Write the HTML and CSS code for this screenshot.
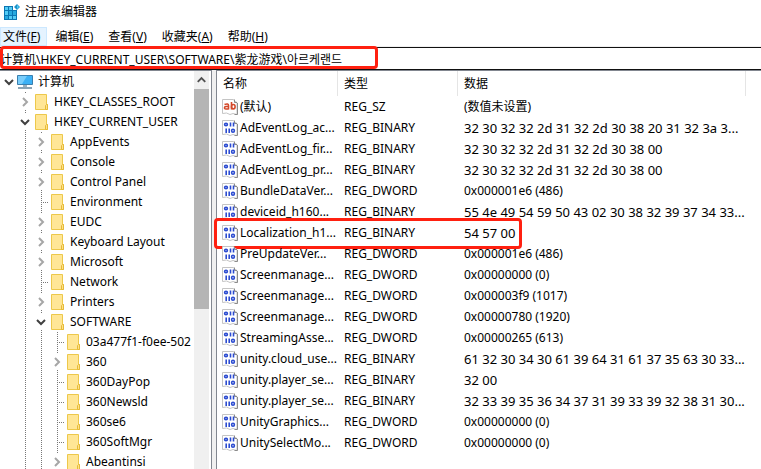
FILE: index.html
```html
<!DOCTYPE html>
<html lang="zh-CN">
<head>
  <meta charset="UTF-8">
  <meta name="viewport" content="width=device-width, initial-scale=1.0">
  <title>注册表编辑器</title>
  <link rel="stylesheet" href="styles.css">
</head>
<body>
  <svg class="sprite" aria-hidden="true">
    <symbol id="folder" viewBox="0 0 16 16">
      <path d="M2.5.5h11v10h1v5h-12z" fill="#ffe696" stroke="#edc84b"/>
      <path d="M12.5 15.5v-4l1-1h1v5z" fill="#ffe08a" stroke="#e6bb38"/>
    </symbol>
    <symbol id="right" viewBox="0 0 16 16">
      <path d="M6 4l4 4-4 4" fill="none" stroke="#a6a6a6" stroke-width="2"/>
    </symbol>
    <symbol id="down" viewBox="0 0 16 16">
      <path d="M4 6l4 4 4-4" fill="none" stroke="#404040" stroke-width="2"/>
    </symbol>
    <symbol id="page" viewBox="0 0 16 16">
      <path d="M.5.5h11l1 1.500 2.500 1.500v12l-4-1-3 1-3.500-1.500-4 .500z" fill="#fff" stroke="#c4c4c4"/>
      <path d="M12.500.500v3h2.500M15.500 4v11.500h-3" fill="none" stroke="#8c8c8c"/>
    </symbol>
    <symbol id="binary" viewBox="0 0 16 16">
      <use href="#page"/>
      <g fill="none" stroke="#2b4bd0" stroke-width="1.600">
        <ellipse cx="4" cy="4.500" rx="1.400" ry="1.200"/>
        <path d="M8.500 2.500v4M11.500 2.500v4M4.200 8.500v4.500M7.200 8.500v4.500"/>
        <ellipse cx="11" cy="10.800" rx="1.400" ry="1.500"/>
      </g>
    </symbol>
    <symbol id="string" viewBox="0 0 16 16">
      <use href="#page"/>
      <g fill="none" stroke="#d3492b" stroke-width="1.600">
        <path d="M2.500 5.500Q6.500 4 6.500 6.500V10.500M6.500 7.500H4Q2.500 7.500 2.500 8.800T4 10H6.500"/>
        <path d="M9.500 3v7.500"/>
        <ellipse cx="11.300" cy="7.700" rx="1.800" ry="2.200"/>
      </g>
    </symbol>
  </svg>

  <header class="titlebar">
    <svg class="app-icon" viewBox="0 0 16 16">
      <path d="M0 2h9v4h4v10H0z" fill="#0b76b3"/>
      <path d="M1 3h3v3H1zM5 3h3v3H5zM1 7h3v4H1zM5 12h3v3H5zM9 12h3v3H9z" fill="#53ccf5"/>
      <path d="M5 7h3v4H5zM9 7h3v4H9zM1 12h3v3H1z" fill="#26a9e0"/>
      <path d="M13 0l3 3-3 3-3-3z" fill="#1a91c9"/>
      <path d="M13 1l2 2-2 2z" fill="#53ccf5"/>
    </svg>
    <span>注册表编辑器</span>
  </header>

  <nav class="menu">
    <button class="open">文件(<u>F</u>)</button>
    <button>编辑(<u>E</u>)</button>
    <button>查看(<u>V</u>)</button>
    <button>收藏夹(<u>A</u>)</button>
    <button>帮助(<u>H</u>)</button>
  </nav>

  <div class="address">
    <input type="text" aria-label="地址" value="计算机\HKEY_CURRENT_USER\SOFTWARE\紫龙游戏\아르케랜드">
    <span class="mark"></span>
  </div>

  <main class="panes">
    <section class="tree-pane">
      <ul class="tree">
        <li>
          <div class="node">
            <button class="toggle" aria-label="计算机"><svg><use href="#down"/></svg></button>
            <svg viewBox="0 0 16 16">
              <path d="M.5 1.500h15v9H.5z" fill="#3cb1f5" stroke="#3a7fae"/>
              <path d="M1 2h9L5 10H1z" fill="#79cdfb"/>
              <path d="M6 11h4v2H6z" fill="#9db2bf"/>
              <path d="M1 14h14" stroke="#8aa4b5" stroke-width="2"/>
            </svg>
            <span>计算机</span>
          </div>
          <ul>
            <li><div class="node"><button class="toggle" aria-label="HKEY_CLASSES_ROOT"><svg><use href="#right"/></svg></button><svg><use href="#folder"/></svg><span>HKEY_CLASSES_ROOT</span></div></li>
            <li>
              <div class="node"><button class="toggle" aria-label="HKEY_CURRENT_USER"><svg><use href="#down"/></svg></button><svg><use href="#folder"/></svg><span>HKEY_CURRENT_USER</span></div>
              <ul>
                <li><div class="node"><button class="toggle" aria-label="AppEvents"><svg><use href="#right"/></svg></button><svg><use href="#folder"/></svg><span>AppEvents</span></div></li>
                <li><div class="node"><button class="toggle" aria-label="Console"><svg><use href="#right"/></svg></button><svg><use href="#folder"/></svg><span>Console</span></div></li>
                <li><div class="node"><button class="toggle" aria-label="Control Panel"><svg><use href="#right"/></svg></button><svg><use href="#folder"/></svg><span>Control Panel</span></div></li>
                <li><div class="node leaf"><svg><use href="#folder"/></svg><span>Environment</span></div></li>
                <li><div class="node"><button class="toggle" aria-label="EUDC"><svg><use href="#right"/></svg></button><svg><use href="#folder"/></svg><span>EUDC</span></div></li>
                <li><div class="node"><button class="toggle" aria-label="Keyboard Layout"><svg><use href="#right"/></svg></button><svg><use href="#folder"/></svg><span>Keyboard Layout</span></div></li>
                <li><div class="node"><button class="toggle" aria-label="Microsoft"><svg><use href="#right"/></svg></button><svg><use href="#folder"/></svg><span>Microsoft</span></div></li>
                <li><div class="node leaf"><svg><use href="#folder"/></svg><span>Network</span></div></li>
                <li><div class="node"><button class="toggle" aria-label="Printers"><svg><use href="#right"/></svg></button><svg><use href="#folder"/></svg><span>Printers</span></div></li>
                <li>
                  <div class="node"><button class="toggle" aria-label="SOFTWARE"><svg><use href="#down"/></svg></button><svg><use href="#folder"/></svg><span>SOFTWARE</span></div>
                  <ul>
                    <li><div class="node leaf"><svg><use href="#folder"/></svg><span>03a477f1-f0ee-502</span></div></li>
                    <li><div class="node"><button class="toggle" aria-label="360"><svg><use href="#right"/></svg></button><svg><use href="#folder"/></svg><span>360</span></div></li>
                    <li><div class="node leaf"><svg><use href="#folder"/></svg><span>360DayPop</span></div></li>
                    <li><div class="node leaf"><svg><use href="#folder"/></svg><span>360Newsld</span></div></li>
                    <li><div class="node leaf"><svg><use href="#folder"/></svg><span>360se6</span></div></li>
                    <li><div class="node leaf"><svg><use href="#folder"/></svg><span>360SoftMgr</span></div></li>
                    <li><div class="node"><button class="toggle" aria-label="Abeantinsi"><svg><use href="#right"/></svg></button><svg><use href="#folder"/></svg><span>Abeantinsi</span></div></li>
                  </ul>
                </li>
              </ul>
            </li>
          </ul>
        </li>
      </ul>
      <div class="scrollbar">
        <button aria-label="向上滚动"><svg viewBox="0 0 16 16"><path d="M4 10l4-4 4 4" fill="none" stroke="#505050" stroke-width="2"/></svg></button>
        <div class="track"><div class="thumb"></div></div>
      </div>
    </section>

    <section class="value-pane">
      <table class="values">
        <colgroup><col class="col-name"><col class="col-type"><col class="col-data"><col></colgroup>
        <thead>
          <tr><th>名称</th><th>类型</th><th>数据</th><th></th></tr>
        </thead>
        <tbody>
          <tr><td><svg><use href="#string"/></svg>(默认)</td><td>REG_SZ</td><td>(数值未设置)</td></tr>
          <tr><td><svg><use href="#binary"/></svg>AdEventLog_ac...</td><td>REG_BINARY</td><td class="bytes">32 30 32 32 2d 31 32 2d 30 38 20 31 32 3a 3...</td></tr>
          <tr><td><svg><use href="#binary"/></svg>AdEventLog_fir...</td><td>REG_BINARY</td><td class="bytes">32 30 32 32 2d 31 32 2d 30 38 00</td></tr>
          <tr><td><svg><use href="#binary"/></svg>AdEventLog_pr...</td><td>REG_BINARY</td><td class="bytes">32 30 32 32 2d 31 32 2d 30 38 00</td></tr>
          <tr><td><svg><use href="#binary"/></svg>BundleDataVer...</td><td>REG_DWORD</td><td>0x000001e6 (486)</td></tr>
          <tr><td><svg><use href="#binary"/></svg>deviceid_h160...</td><td>REG_BINARY</td><td class="bytes">55 4e 49 54 59 50 43 02 30 38 32 39 37 34 33...</td></tr>
          <tr><td><svg><use href="#binary"/></svg>Localization_h1...<span class="mark"></span></td><td>REG_BINARY</td><td class="bytes">54 57 00</td></tr>
          <tr><td><svg><use href="#binary"/></svg>PreUpdateVer...</td><td>REG_DWORD</td><td>0x000001e6 (486)</td></tr>
          <tr><td><svg><use href="#binary"/></svg>Screenmanage...</td><td>REG_DWORD</td><td>0x00000000 (0)</td></tr>
          <tr><td><svg><use href="#binary"/></svg>Screenmanage...</td><td>REG_DWORD</td><td>0x000003f9 (1017)</td></tr>
          <tr><td><svg><use href="#binary"/></svg>Screenmanage...</td><td>REG_DWORD</td><td>0x00000780 (1920)</td></tr>
          <tr><td><svg><use href="#binary"/></svg>StreamingAsse...</td><td>REG_DWORD</td><td>0x00000265 (613)</td></tr>
          <tr><td><svg><use href="#binary"/></svg>unity.cloud_use...</td><td>REG_BINARY</td><td class="bytes">61 32 30 34 30 61 39 64 31 61 37 35 63 30 33...</td></tr>
          <tr><td><svg><use href="#binary"/></svg>unity.player_se...</td><td>REG_BINARY</td><td class="bytes">32 00</td></tr>
          <tr><td><svg><use href="#binary"/></svg>unity.player_se...</td><td>REG_BINARY</td><td class="bytes">32 33 39 35 36 34 37 31 39 33 39 32 38 31 30...</td></tr>
          <tr><td><svg><use href="#binary"/></svg>UnityGraphics...</td><td>REG_DWORD</td><td>0x00000000 (0)</td></tr>
          <tr><td><svg><use href="#binary"/></svg>UnitySelectMo...</td><td>REG_DWORD</td><td>0x00000000 (0)</td></tr>
        </tbody>
      </table>
    </section>
  </main>
</body>
</html>
```

FILE: styles.css
```css
* {
  box-sizing: border-box;
}
body {
  display: flex;
  flex-direction: column;
  height: 100vh;
  margin: 0;
  overflow: hidden;
  background: #fff;
  color: #000;
  font: 12px/20px "Noto Sans", "Noto Sans CJK SC", sans-serif;
}
button, input {
  border: 0;
  padding: 0;
  background: none;
  color: inherit;
  font: inherit;
}
ul {
  margin: 0;
  padding: 0;
  list-style: none;
}
svg {
  display: block;
  flex: none;
  width: 16px;
  height: 16px;
}
.sprite {
  position: absolute;
  width: 0;
  height: 0;
}
.mark {
  position: absolute;
  border: 3px solid #ff2010;
  border-radius: 4px;
  pointer-events: none;
}

/* title and menu */
.titlebar {
  display: flex;
  gap: 5px;
  align-items: center;
  height: 27px;
  padding: 0 4px 3px;
  flex: none;
}
.menu {
  display: flex;
  height: 19px;
  flex: none;
}
.menu button {
  padding: 0 7px 0 8px;
  line-height: 19px;
}
.menu .open {
  padding-left: 3px;
  background: #e5f3ff;
  box-shadow: inset 0 0 0 1px #cce8ff;
}

/* address */
.address {
  position: relative;
  flex: none;
  padding-top: 1px;
  background: #f0f0f0;
}
.address input {
  display: block;
  width: 100%;
  height: 23px;
  border: solid #111;
  border-width: 1px 0;
  background: #fff;
}
.address .mark {
  inset: 0 auto 1px 0;
  width: 378px;
}

/* panes */
.panes {
  display: flex;
  gap: 4px;
  flex: 1;
  min-height: 0;
  background: #f0f0f0;
}
.tree-pane {
  display: flex;
  width: 212px;
  flex: none;
  padding-right: 2px;
  border: solid #828790;
  border-width: 1px 1px 0 0;
  background: #fff;
}
.tree {
  flex: 1;
  min-width: 0;
  overflow: hidden;
  padding: 1px 0 0;
}
.tree ul {
  padding-left: 16px;
  background: repeating-linear-gradient(#777 0 1px, transparent 1px 2px) 25px 0 / 1px 100% no-repeat;
}
.node {
  display: flex;
  align-items: center;
  height: 20px;
  padding-left: 1px;
  white-space: nowrap;
}
.node span {
  padding-left: 5px;
}
.toggle {
  background: #fff;
}
.leaf::before {
  content: "";
  width: 7px;
  height: 1px;
  margin-left: 9px;
  background: repeating-linear-gradient(90deg, transparent 0 1px, #777 1px 2px);
}
.scrollbar {
  display: flex;
  flex-direction: column;
  width: 15px;
  background: #f0f0f0;
}
.scrollbar button {
  height: 18px;
}
.scrollbar svg {
  width: 15px;
}
.track {
  flex: 1;
}
.thumb {
  height: 58%;
  background: #b5b5b5;
}

/* values */
.value-pane {
  flex: 1;
  min-width: 0;
  border: solid #828790;
  border-width: 1px 0 0 1px;
  background: #fff;
}
.values {
  width: 100%;
  table-layout: fixed;
  border-collapse: separate;
  border-spacing: 0;
}
.col-name {
  width: 121px;
}
.col-type {
  width: 120px;
}
.col-data {
  width: 288px;
}
.values th {
  height: 25px;
  padding: 0 6px;
  border-right: 1px solid #e5e5e5;
  font-weight: normal;
  text-align: left;
}
.values th:last-child {
  border: 0;
}
.values tbody tr {
  position: relative;
}
.values td {
  height: 21px;
  padding: 0 0 0 6px;
  line-height: 20px;
  white-space: nowrap;
}
.values td:first-child {
  display: flex;
  gap: 2px;
  align-items: center;
  padding-left: 5px;
}
.values .bytes {
  font-size: 13px;
}
.values .mark {
  top: -4px;
  bottom: -6px;
  left: -3px;
  width: 308px;
}
```
